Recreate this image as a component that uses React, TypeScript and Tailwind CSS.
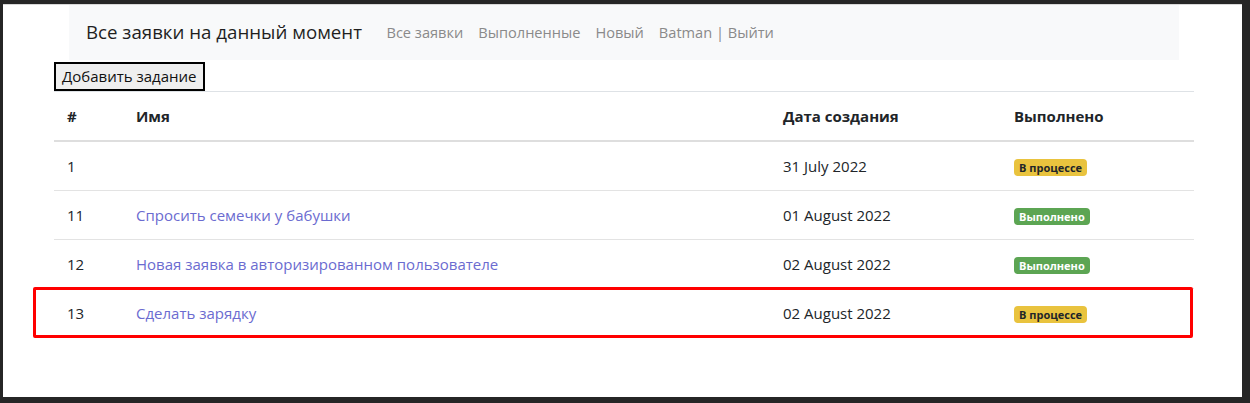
import React from "react";

type Task = {
  id: number;
  name: string;
  date: string;
  done: boolean;
};

const tasks: Task[] = [
  { id: 1, name: "", date: "31 July 2022", done: false },
  { id: 11, name: "Спросить семечки у бабушки", date: "01 August 2022", done: true },
  { id: 12, name: "Новая заявка в авторизированном пользователе", date: "02 August 2022", done: true },
  { id: 13, name: "Сделать зарядку", date: "02 August 2022", done: false },
];

function StatusBadge({ done }: { done: boolean }) {
  if (done) {
    return (
      <span className="inline-block rounded-[4px] bg-[#5ca553] px-[5px] py-[1px] text-[11px] font-bold leading-[15px] text-white">
        Выполнено
      </span>
    );
  }
  return (
    <span className="inline-block rounded-[4px] bg-[#e9c33e] px-[5px] py-[1px] text-[11px] font-bold leading-[15px] text-[#212529]">
      В процессе
    </span>
  );
}

export default function App() {
  return (
    <div className="h-[403px] w-[1250px] bg-[#262626] pt-[4px] pl-[3px] font-['Open_Sans',sans-serif] text-[#212529]">
      <div className="relative h-[393px] w-[1239px] border-t border-[#d8d8d8] bg-white">
        {/* navbar */}
        <nav className="ml-[66px] flex h-[55px] w-[1110px] items-center bg-[#f8f9fa] pl-[17px]">
          <span className="mr-[17px] text-[18.7px] text-[#1f1f1f]">Все заявки на данный момент</span>
          <a className="px-[7.5px] text-[14.6px] text-[#8a8a8a]">Все заявки</a>
          <a className="px-[7.5px] text-[14.6px] text-[#8a8a8a]">Выполненные</a>
          <a className="px-[7.5px] text-[14.6px] text-[#8a8a8a]">Новый</a>
          <a className="px-[7.5px] text-[14.6px] text-[#8a8a8a]">Batman | Выйти</a>
        </nav>

        <div className="ml-[51px] mt-[2px] w-[1140px]">
          <button className="h-[29px] border-2 border-black bg-[#efefef] px-[6px] text-[15px] leading-none text-[#111]">
            Добавить задание
          </button>

          {/* table */}
          <div className="border-t border-[#dee2e6]">
            <div className="grid h-[50px] grid-cols-[69px_647px_231px_193px] items-center border-b-2 border-[#dedede] text-[15px] font-bold">
              <div className="pl-[13px]">#</div>
              <div className="pl-[13px]">Имя</div>
              <div className="pl-[13px]">Дата создания</div>
              <div className="pl-[13px]">Выполнено</div>
            </div>
            {tasks.map((t, i) => (
              <div
                key={t.id}
                className={
                  i < tasks.length - 1
                    ? "grid h-[49px] grid-cols-[69px_647px_231px_193px] items-center border-b border-[#e3e3e3] text-[15px]"
                    : "grid h-[49px] grid-cols-[69px_647px_231px_193px] items-center text-[15px]"
                }
              >
                <div className="pl-[13px]">{t.id}</div>
                <div className="pl-[13px]">
                  <a className="text-[#6b6bd0]">{t.name}</a>
                </div>
                <div className="pl-[13px]">{t.date}</div>
                <div className="pl-[13px]">
                  <StatusBadge done={t.done} />
                </div>
              </div>
            ))}
          </div>
        </div>

        {/* annotation frame */}
        <div className="absolute left-[30px] top-[282px] h-[51px] w-[1160px] rounded-[2px] border-[3px] border-[#ff0000]" />
      </div>
    </div>
  );
}
